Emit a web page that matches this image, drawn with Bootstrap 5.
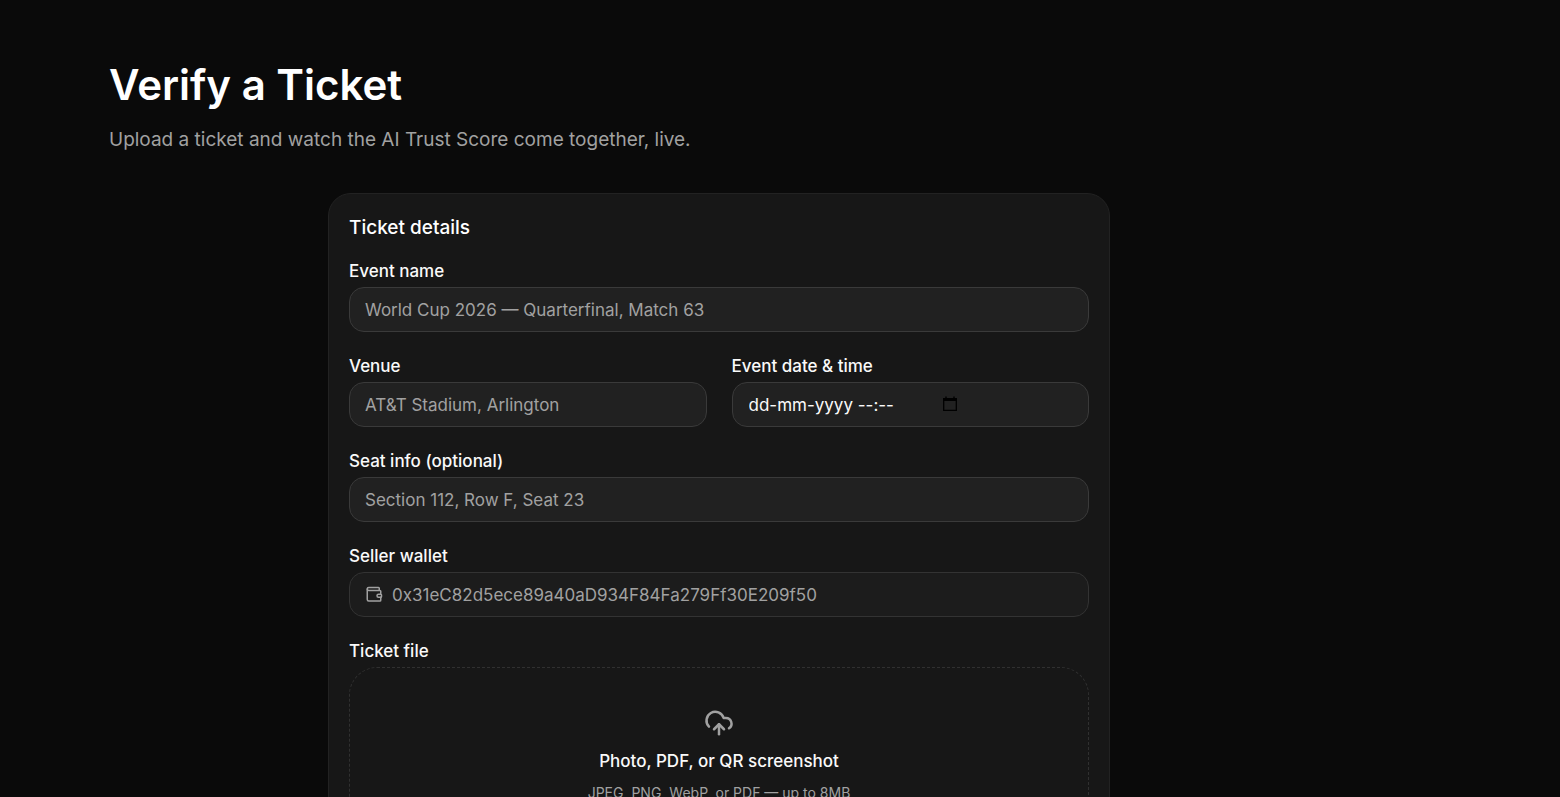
<!DOCTYPE html>
<html lang="en" data-bs-theme="dark">
<head>
<meta charset="utf-8">
<meta name="viewport" content="width=device-width, initial-scale=1">
<title>Verify a Ticket</title>
<link href="https://cdn.jsdelivr.net/npm/bootstrap@5.3.0/dist/css/bootstrap.min.css" rel="stylesheet">
<style>
  body { background: #0a0a0a; color: #fafafa; font-family: Inter, "Liberation Sans", sans-serif; font-size: 17px; overflow-x: hidden; scrollbar-width: none; }
  body::-webkit-scrollbar { display: none; }
  .page { padding: 60px 231px 60px 109px; }
  .page-title { font-size: 42px; line-height: 50px; font-weight: 600; margin-bottom: 16px; }
  .page-lead { font-size: 19px; line-height: 28px; color: #a1a1a1; margin-bottom: 39px; }
  .ticket-card { max-width: 782px; background: #171717; border: 1px solid #222; border-radius: 23px; padding: 20px; }
  .ticket-title { font-size: 19px; line-height: 27px; font-weight: 500; margin-bottom: 21px; }
  .fields { gap: 25px; }
  .form-label { display: block; width: fit-content; font-size: 17px; line-height: 18px; font-weight: 500; margin-bottom: 7px; color: #fafafa; }
  .field-box { height: 45px; padding: 0 15px; font-size: 17px; background: #212121; border: 1px solid #3a3a3a; border-radius: 15px; color: #fafafa; }
  .field-box:focus, .field-box:focus-within { background: #212121; border-color: #737373; box-shadow: none; }
  .field-box::placeholder { color: #a1a1a1; opacity: 1; }
  .bare-input { height: 43px; background: transparent; border: 0; padding: 0; outline: 0; color: #a1a1a1; min-width: 0; }
  .date-input { width: 193px; padding-left: 1px; color: #fafafa; }
  .date-input::placeholder { color: #fafafa; opacity: 1; }
  .date-button { color: #000; line-height: 0; padding-bottom: 2px; }
  .wallet-box { background: #1c1c1c; border-color: #333; color: #a1a1a1; gap: 9px; }
  .drop-zone { padding: 40px 20px; border: 1px dashed #303030; border-radius: 28px; cursor: pointer; }
  .drop-zone svg { color: #a1a1a1; margin-bottom: 11px; }
  .drop-title { line-height: 25px; font-weight: 500; margin-bottom: 9px; }
  .drop-note { font-size: 14px; line-height: 20px; color: #a1a1a1; }
  @media (max-width: 1200px) { .page { padding: 40px 24px; } }
</style>
</head>
<body>
<main class="page">
  <h1 class="page-title">Verify a Ticket</h1>
  <p class="page-lead">Upload a ticket and watch the AI Trust Score come together, live.</p>
  <form class="ticket-card mx-auto">
    <h2 class="ticket-title">Ticket details</h2>
    <div class="fields d-flex flex-column">
      <div>
        <label class="form-label" for="event">Event name</label>
        <input class="form-control field-box" id="event" type="text" placeholder="World Cup 2026 — Quarterfinal, Match 63">
      </div>
      <div class="fields d-flex flex-column flex-md-row">
        <div class="flex-fill w-100">
          <label class="form-label" for="venue">Venue</label>
          <input class="form-control field-box" id="venue" type="text" placeholder="AT&amp;T Stadium, Arlington">
        </div>
        <div class="flex-fill w-100">
          <label class="form-label" for="date">Event date &amp; time</label>
          <div class="field-box d-flex align-items-center">
            <input class="bare-input date-input" id="date" type="text" placeholder="dd-mm-yyyy --:--">
            <button class="btn px-0 pt-0 border-0 date-button" type="button" aria-label="Choose date">
              <svg width="18" height="18" viewBox="0 0 18 18" fill="none" stroke="currentColor"><path d="M2.700 4v11.300h12.600V4" stroke-width="1.3"/><path d="M2 4.500h14" stroke-width="3"/><path d="M5 1.500v2M13 1.500v2" stroke-width="1.4"/></svg>
            </button>
          </div>
        </div>
      </div>
      <div>
        <label class="form-label" for="seat">Seat info (optional)</label>
        <input class="form-control field-box" id="seat" type="text" placeholder="Section 112, Row F, Seat 23">
      </div>
      <div>
        <label class="form-label" for="wallet">Seller wallet</label>
        <div class="field-box wallet-box d-flex align-items-center">
          <svg class="flex-shrink-0" width="18" height="18" viewBox="0 0 24 24" fill="none" stroke="currentColor" stroke-width="2" stroke-linecap="round" stroke-linejoin="round" aria-hidden="true"><path d="M19 6V3a1 1 0 0 0-1-1H5a2 2 0 0 0 0 4h15a1 1 0 0 1 1 1v4h-3a2 2 0 0 0 0 4h3a1 1 0 0 0 1-1v-2a1 1 0 0 0-1-1"/><path d="M3 4v14a2 2 0 0 0 2 2h15a1 1 0 0 0 1-1v-4"/></svg>
          <input class="bare-input flex-fill" id="wallet" type="text" readonly value="0x31eC82d5ece89a40aD934F84Fa279Ff30E209f50">
        </div>
      </div>
      <div>
        <label class="form-label" for="file">Ticket file</label>
        <label class="drop-zone d-flex flex-column align-items-center text-center" for="file">
          <svg width="30" height="30" viewBox="0 0 24 24" fill="none" stroke="currentColor" stroke-width="2" stroke-linecap="round" stroke-linejoin="round" aria-hidden="true"><path d="M12 13v8"/><path d="M4 14.899A7 7 0 1 1 15.710 8h1.790a4.500 4.500 0 0 1 2.500 8.242"/><path d="m8 17 4-4 4 4"/></svg>
          <span class="drop-title">Photo, PDF, or QR screenshot</span>
          <span class="drop-note">JPEG, PNG, WebP, or PDF — up to 8MB</span>
        </label>
        <input class="visually-hidden" id="file" type="file" accept="image/*,.pdf">
      </div>
    </div>
  </form>
</main>
<script src="https://cdn.jsdelivr.net/npm/bootstrap@5.3.0/dist/js/bootstrap.bundle.min.js"></script>
</body>
</html>
